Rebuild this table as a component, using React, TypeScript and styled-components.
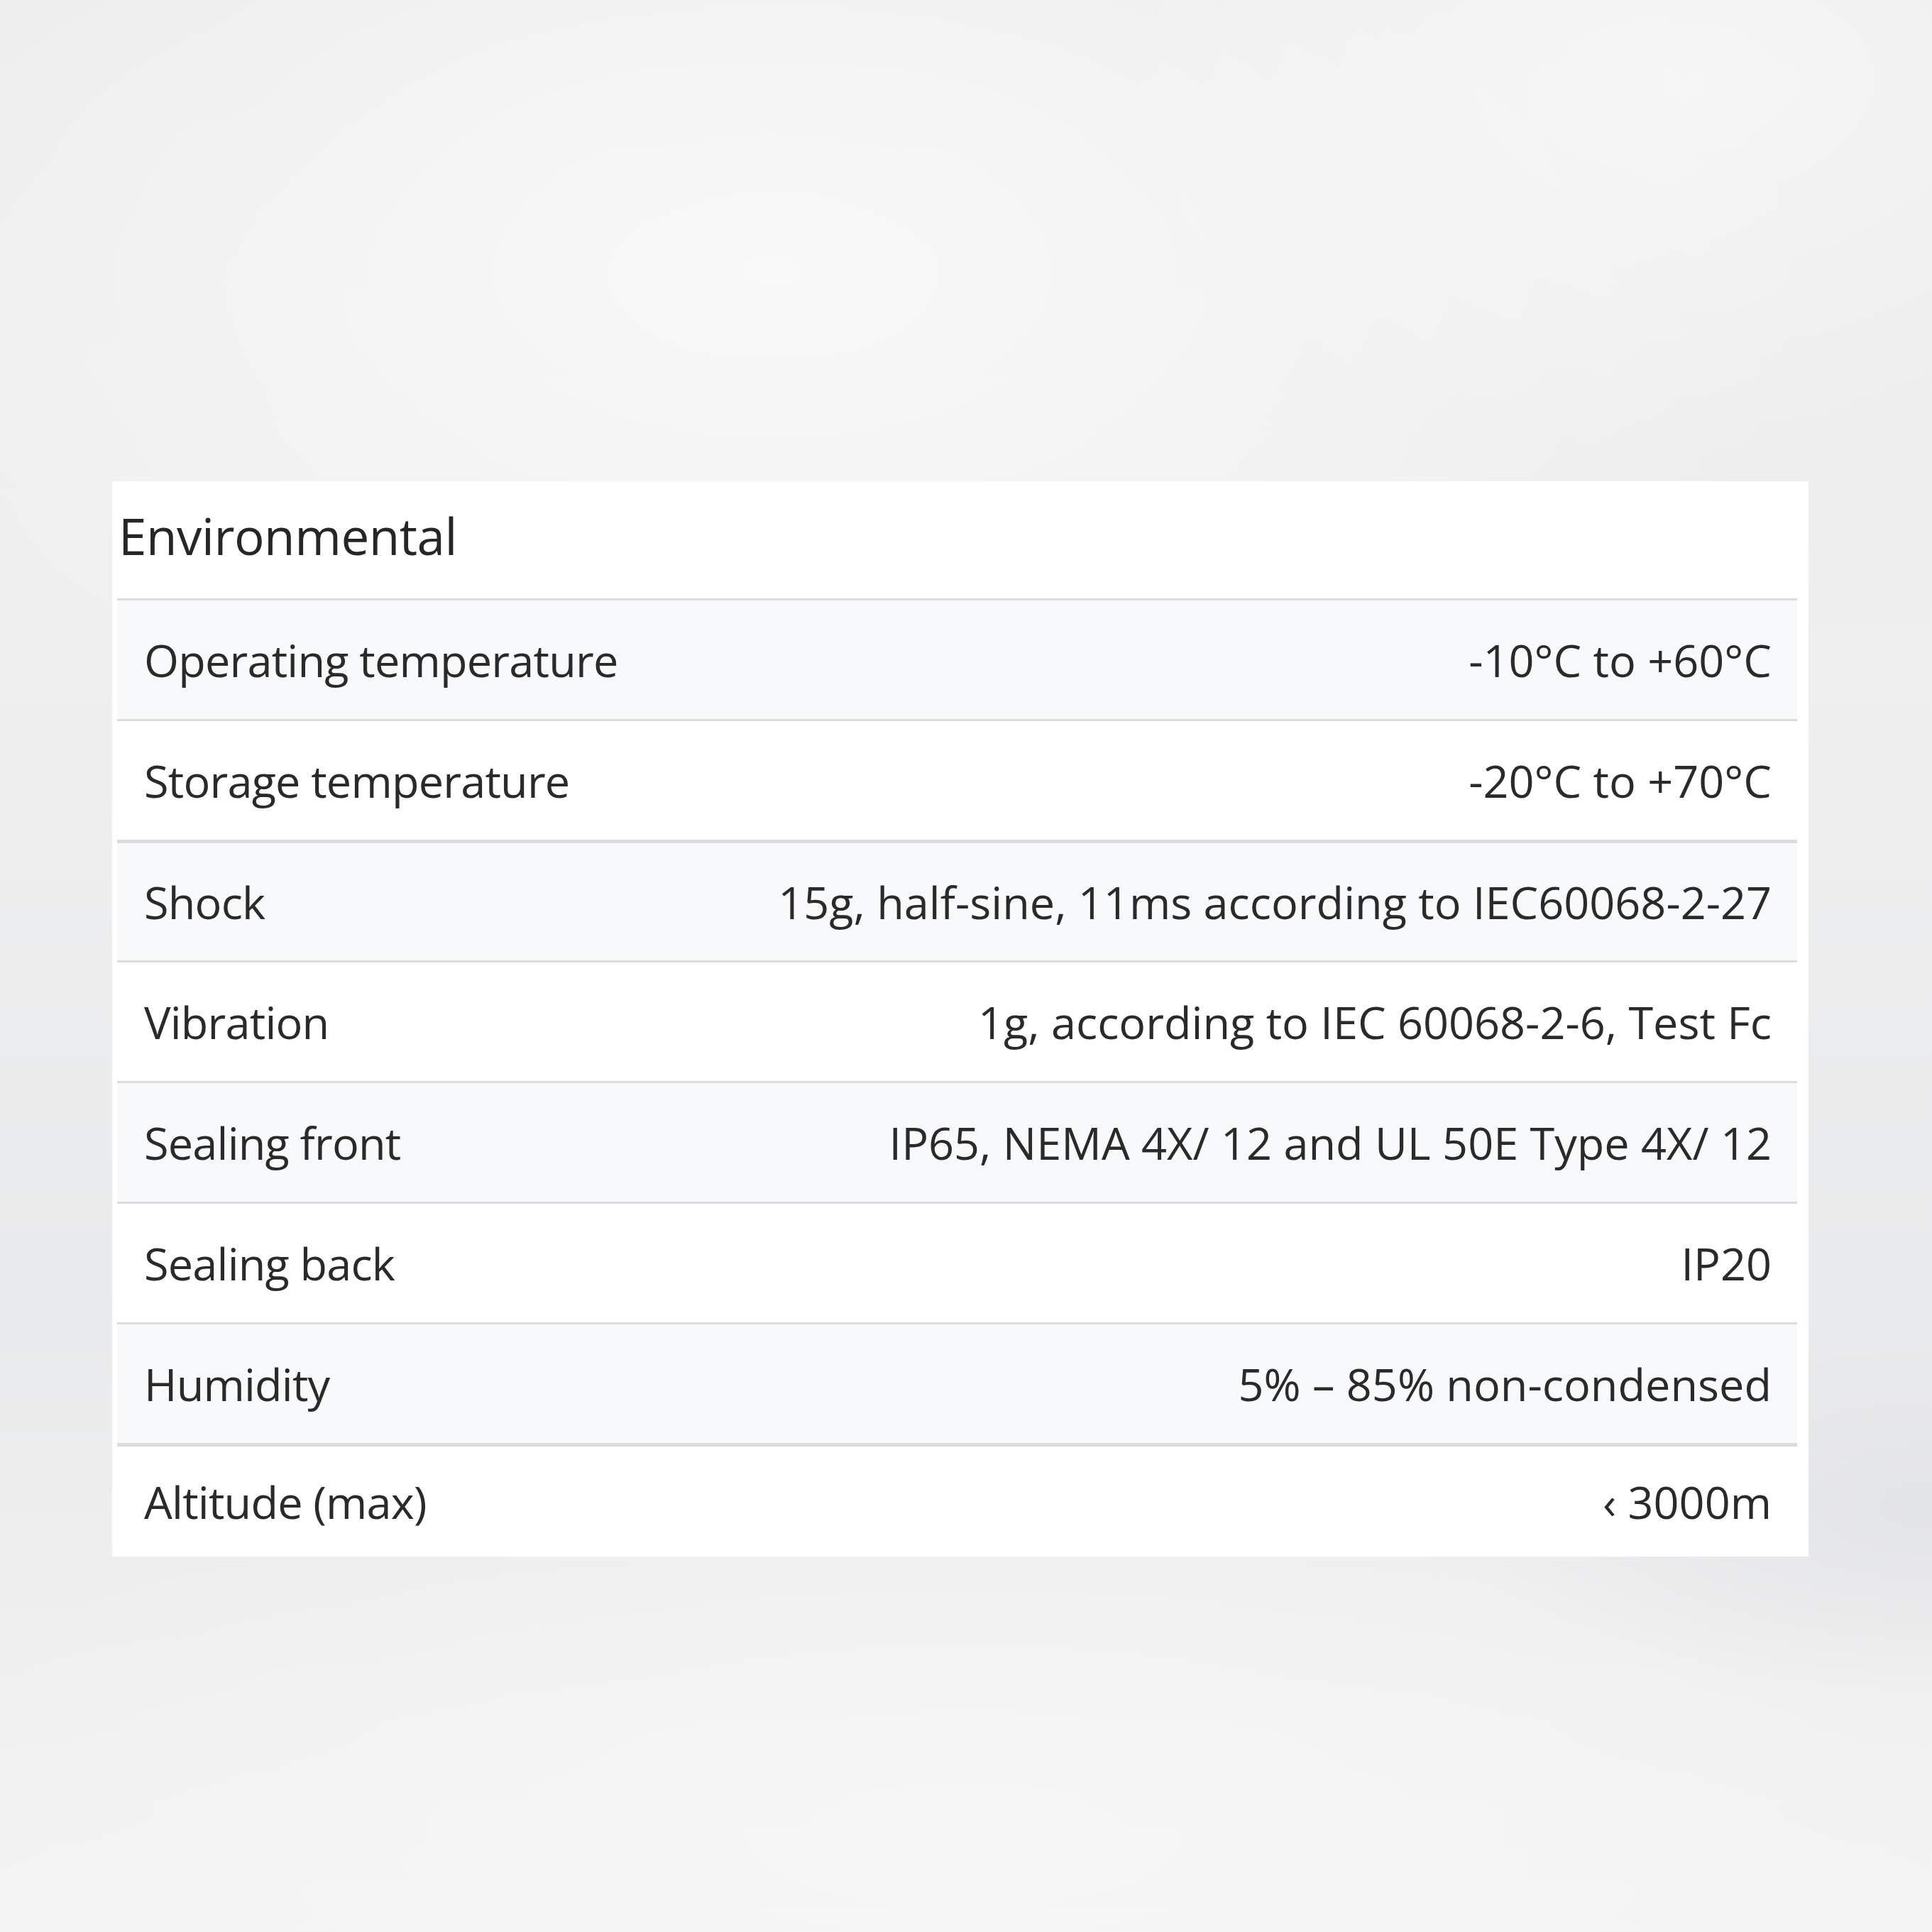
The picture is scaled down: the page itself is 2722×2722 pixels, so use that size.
import React from "react";
import styled, { createGlobalStyle } from "styled-components";

const Global = createGlobalStyle`
  html, body { margin: 0; padding: 0; }
  body { font-family: "Open Sans", "Noto Sans", sans-serif; }
`;

const Page = styled.div`
  width: 2722px;
  height: 2722px;
  box-sizing: border-box;
  padding: 678px 174px 0 158px;
  background:
    radial-gradient(ellipse 55% 30% at 40% 14%, rgba(250,250,250,0.9) 0%, rgba(250,250,250,0) 100%),
    radial-gradient(ellipse 30% 20% at 88% 4%, rgba(248,248,248,0.8) 0%, rgba(248,248,248,0) 100%),
    radial-gradient(ellipse 25% 10% at 100% 78%, rgba(226,227,229,0.9) 0%, rgba(226,227,229,0) 100%),
    radial-gradient(ellipse 60% 20% at 50% 95%, rgba(247,247,247,0.9) 0%, rgba(247,247,247,0) 100%),
    linear-gradient(180deg, #ececed 0%, #efeff0 35%, #e9eaeb 68%, #eeeeef 80%, #f3f3f3 100%);
`;

const Card = styled.section`
  background: #ffffff;
  display: flex;
  flex-direction: column;
  padding: 0 16px 0 7px;
`;

const Title = styled.h2`
  margin: 0;
  height: 165px;
  box-sizing: border-box;
  padding: 0 0 12px 2px;
  display: flex;
  align-items: center;
  font-family: "Open Sans", "Noto Sans", sans-serif;
  font-weight: 400;
  font-size: 71px;
  color: #262626;
  letter-spacing: -0.5px;
`;

const Row = styled.div<{ $shade: boolean; $thick: boolean; $last: boolean }>`
  display: flex;
  justify-content: space-between;
  align-items: center;
  box-sizing: border-box;
  height: ${(p) => (p.$last ? 160 : 170)}px;
  border-top: ${(p) => (p.$thick ? 5 : 3)}px solid #dcdcdc;
  background: ${(p) => (p.$shade ? "#f8f9fb" : "#ffffff")};
  padding: 0 36px 0 38px;
  font-family: "Open Sans", "Noto Sans", sans-serif;
  font-size: 63px;
  color: #2a2a2a;
`;

const Label = styled.span`
  letter-spacing: -0.8px;
`;
const Value = styled.span`
  text-align: right;
  letter-spacing: 0px;
`;

const rows: [string, string][] = [
  ["Operating temperature", "-10°C to +60°C"],
  ["Storage temperature", "-20°C to +70°C"],
  ["Shock", "15g, half-sine, 11ms according to IEC60068-2-27"],
  ["Vibration", "1g, according to IEC 60068-2-6, Test Fc"],
  ["Sealing front", "IP65, NEMA 4X/ 12 and UL 50E Type 4X/ 12"],
  ["Sealing back", "IP20"],
  ["Humidity", "5% – 85% non-condensed"],
  ["Altitude (max)", "‹ 3000m"],
];

export default function App() {
  return (
    <>
      <Global />
      <Page>
        <Card>
          <Title>Environmental</Title>
          {rows.map(([l, v], i) => (
            <Row key={l} $shade={i % 2 === 0} $thick={i === 2 || i === 7} $last={i === rows.length - 1}>
              <Label>{l}</Label>
              <Value>{v}</Value>
            </Row>
          ))}
        </Card>
      </Page>
    </>
  );
}
